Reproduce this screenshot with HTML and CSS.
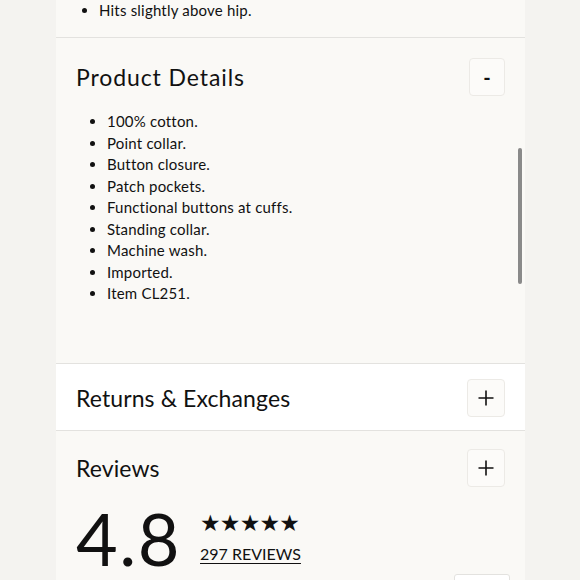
FILE: index.html
```html
<!DOCTYPE html>
<html>
<head>
<meta charset="utf-8">
<link rel="stylesheet" href="styles.css">
</head>
<body>
<div class="page">
  <div class="section prev">
    <ul class="list prev-list">
      <li>Hits slightly above hip.</li>
    </ul>
  </div>
  <div class="section details">
    <div class="head">
      <h2 class="title wide">Product Details</h2>
      <button class="toggle minus">-</button>
    </div>
    <ul class="list">
      <li>100% cotton.</li>
      <li>Point collar.</li>
      <li>Button closure.</li>
      <li>Patch pockets.</li>
      <li>Functional buttons at cuffs.</li>
      <li>Standing collar.</li>
      <li>Machine wash.</li>
      <li>Imported.</li>
      <li>Item CL251.</li>
    </ul>
  </div>
  <div class="section returns">
    <div class="head">
      <h2 class="title">Returns &amp; Exchanges</h2>
      <button class="toggle"><svg width="16" height="16" viewBox="0 0 16 16"><path d="M8 0.5V15.5M0.5 8H15.5" stroke="#111" stroke-width="1.6" fill="none"/></svg></button>
    </div>
  </div>
  <div class="section reviews">
    <div class="head">
      <h2 class="title">Reviews</h2>
      <button class="toggle"><svg width="16" height="16" viewBox="0 0 16 16"><path d="M8 0.5V15.5M0.5 8H15.5" stroke="#111" stroke-width="1.6" fill="none"/></svg></button>
    </div>
    <div class="rating">
      <div class="score">4.8</div>
      <div class="meta">
        <div class="stars">★★★★★</div>
        <a class="count">297 REVIEWS</a>
      </div>
    </div>
    <div class="write-row"><span class="write"></span></div>
  </div>
  <div class="scrollbar"></div>
</div>
</body>
</html>
```
FILE: styles.css
```css
html, body {
  margin: 0;
  padding: 0;
}
body {
  background: #f4f3f0;
  font-family: Lato, "Open Sans", sans-serif;
  color: #111;
  height: 580px;
  overflow: hidden;
}
.page {
  position: relative;
  width: 469px;
  margin-left: 56px;
  background: #faf9f6;
  min-height: 700px;
}
.section {
  border-bottom: 1px solid #e3e2df;
  padding-left: 20px;
  padding-right: 20px;
}
.list {
  margin: 0;
  padding-left: 31px;
  font-size: 15px;
  line-height: 21.5px;
  letter-spacing: 0.2px;
  list-style: disc;
}
.prev {
  padding-top: 0;
  height: 37px;
}
.prev-list {
  padding-left: 23px;
}
.head {
  display: flex;
  align-items: center;
  justify-content: space-between;
}
.title {
  margin: 0;
  font-weight: 400;
  font-size: 23px;
  letter-spacing: 0.1px;
}
.title.wide {
  letter-spacing: 0.9px;
}
.toggle {
  width: 38px;
  height: 38px;
  padding: 0;
  border: 1px solid #eceae6;
  border-radius: 4px;
  background: #fcfbf9;
  display: flex;
  align-items: center;
  justify-content: center;
  font-family: Lato, sans-serif;
  font-size: 20px;
  color: #111;
}
.minus {
  width: 36px;
  font-weight: 700;
}
.details {
  padding-top: 20px;
  padding-bottom: 58px;
}
.details .head {
  margin-bottom: 15px;
}
.returns {
  background: #fff;
  padding-top: 15px;
  padding-bottom: 13px;
}
.reviews {
  border-bottom: none;
  padding-top: 18px;
}
.rating {
  display: flex;
  align-items: center;
  margin-top: 21px;
}
.score {
  font-size: 72px;
  line-height: 60px;
  letter-spacing: 1.5px;
}
.meta {
  margin-left: 19px;
  display: flex;
  flex-direction: column;
  padding-top: 0;
}
.stars {
  font-family: "DejaVu Sans", sans-serif;
  font-size: 23px;
  line-height: 22px;
  letter-spacing: -0.8px;
}
.count {
  margin-top: 10px;
  font-size: 16px;
  text-decoration: underline;
  text-underline-offset: 3px;
}
.write-row {
  display: flex;
  justify-content: flex-end;
  margin-top: 6px;
}
.write {
  width: 54px;
  height: 30px;
  border: 1px solid #e3e2df;
  border-radius: 3px;
  background: #fff;
  margin-right: -5px;
}
.scrollbar {
  position: absolute;
  left: 462px;
  top: 148px;
  width: 4px;
  height: 136px;
  border-radius: 2px;
  background: #8a8a8a;
}
```
